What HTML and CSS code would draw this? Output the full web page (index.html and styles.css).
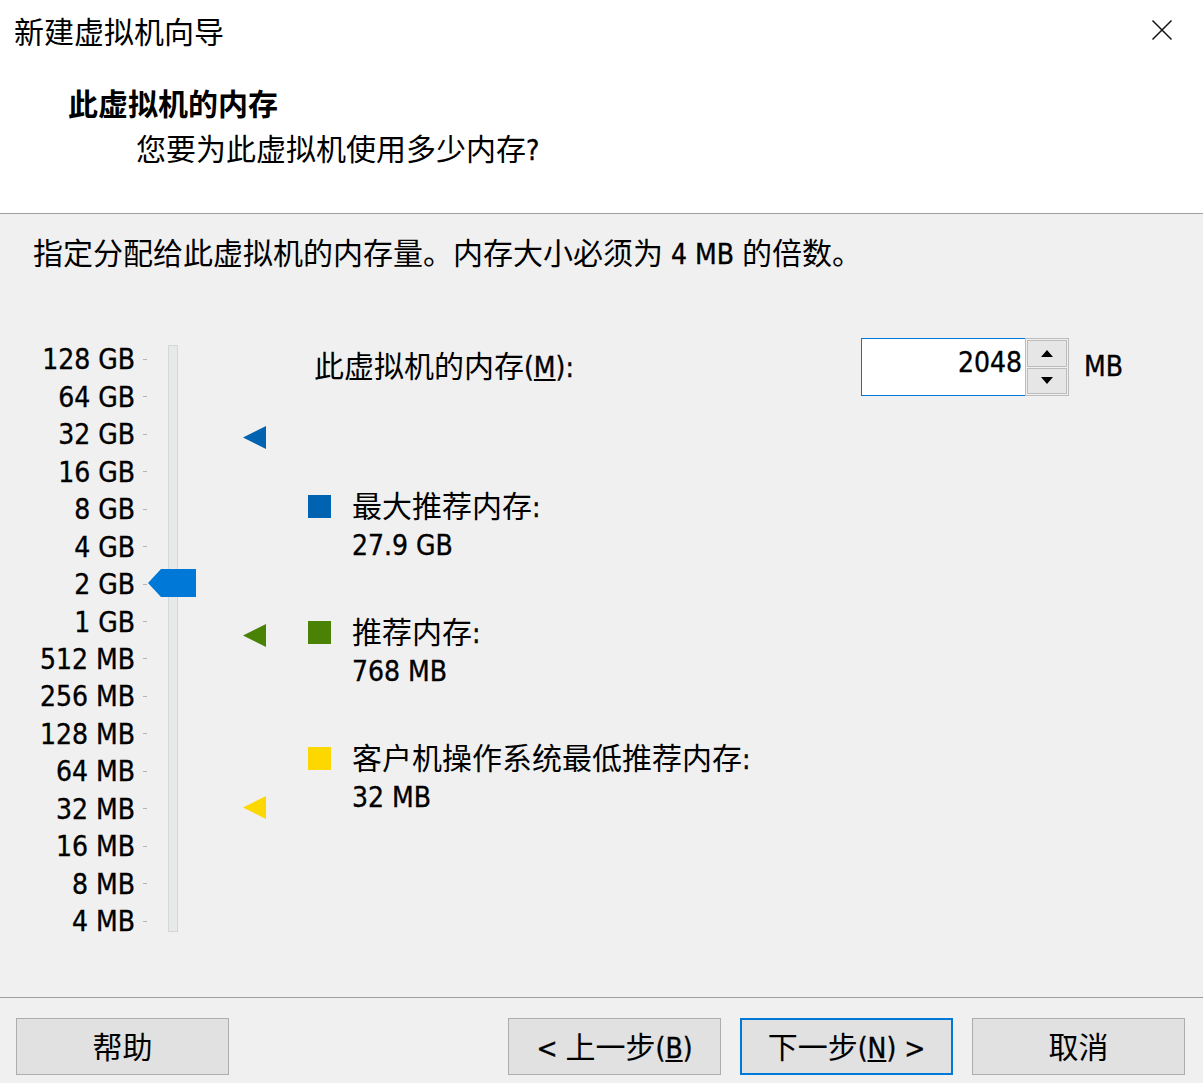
FILE: index.html
```html
<!DOCTYPE html>
<html lang="zh-CN">
<head>
<meta charset="utf-8">
<title>新建虚拟机向导</title>
<link rel="stylesheet" href="styles.css">
</head>
<body>
<div class="window">
  <header class="header">
    <div class="titlebar">
      <span class="title">新建虚拟机向导</span>
      <svg class="close" width="22" height="22" viewBox="0 0 22 22"><path d="M1.5 1.5 L20.5 20.5 M20.5 1.5 L1.5 20.5" stroke="#111" stroke-width="1.5" fill="none"/></svg>
    </div>
    <div class="h1">此虚拟机的内存</div>
    <div class="sub">您要为此虚拟机使用多少内存<span class="l">?</span></div>
  </header>

  <main class="content">
    <p class="intro">指定分配给此虚拟机的内存量。内存大小必须为<span class="l"> 4 MB </span>的倍数。</p>
    <div class="main">
      <div class="scale">
        <div class="labels">
          <div class="row"><span class="l">128 GB</span><i class="tick"></i></div>
          <div class="row"><span class="l">64 GB</span><i class="tick"></i></div>
          <div class="row"><span class="l">32 GB</span><i class="tick"></i></div>
          <div class="row"><span class="l">16 GB</span><i class="tick"></i></div>
          <div class="row"><span class="l">8 GB</span><i class="tick"></i></div>
          <div class="row"><span class="l">4 GB</span><i class="tick"></i></div>
          <div class="row"><span class="l">2 GB</span><i class="tick"></i></div>
          <div class="row"><span class="l">1 GB</span><i class="tick"></i></div>
          <div class="row"><span class="l">512 MB</span><i class="tick"></i></div>
          <div class="row"><span class="l">256 MB</span><i class="tick"></i></div>
          <div class="row"><span class="l">128 MB</span><i class="tick"></i></div>
          <div class="row"><span class="l">64 MB</span><i class="tick"></i></div>
          <div class="row"><span class="l">32 MB</span><i class="tick"></i></div>
          <div class="row"><span class="l">16 MB</span><i class="tick"></i></div>
          <div class="row"><span class="l">8 MB</span><i class="tick"></i></div>
          <div class="row"><span class="l">4 MB</span><i class="tick"></i></div>
        </div>
        <div class="track"></div>
        <svg class="thumb" width="48" height="28" viewBox="0 0 48 28"><polygon points="0,14 13,0 48,0 48,28 13,28" fill="#0078d7"/></svg>
        <svg class="marker m-max" width="23" height="23" viewBox="0 0 23 23"><polygon points="0,11.5 23,0 23,23" fill="#0063b1"/></svg>
        <svg class="marker m-rec" width="23" height="23" viewBox="0 0 23 23"><polygon points="0,11.5 23,0 23,23" fill="#498205"/></svg>
        <svg class="marker m-min" width="23" height="23" viewBox="0 0 23 23"><polygon points="0,11.5 23,0 23,23" fill="#fcd800"/></svg>
      </div>

      <div class="details">
        <div class="spinrow">
          <label class="spinlabel">此虚拟机的内存<span class="l">(<u>M</u>):</span></label>
          <div class="spin">
            <div class="spinfield"><span class="l">2048</span></div>
            <div class="spinbtns">
              <div class="sbtn"><svg width="12" height="7" viewBox="0 0 12 7"><polygon points="6,0 12,7 0,7" fill="#000"/></svg></div>
              <div class="sbtn"><svg width="12" height="7" viewBox="0 0 12 7"><polygon points="0,0 12,0 6,7" fill="#000"/></svg></div>
            </div>
          </div>
          <span class="l unit">MB</span>
        </div>

        <div class="legend">
          <div class="item">
            <i class="sq sq-max"></i>
            <div class="txt">
              <div class="name">最大推荐内存<span class="l">:</span></div>
              <div class="val l">27.9 GB</div>
            </div>
          </div>
          <div class="item">
            <i class="sq sq-rec"></i>
            <div class="txt">
              <div class="name">推荐内存<span class="l">:</span></div>
              <div class="val l">768 MB</div>
            </div>
          </div>
          <div class="item">
            <i class="sq sq-min"></i>
            <div class="txt">
              <div class="name">客户机操作系统最低推荐内存<span class="l">:</span></div>
              <div class="val l">32 MB</div>
            </div>
          </div>
        </div>
      </div>
    </div>
  </main>

  <footer class="footer">
    <button class="btn">帮助</button>
    <div class="btngroup">
      <button class="btn"><span class="l">&lt; </span>上一步<span class="l">(<u>B</u>)</span></button>
      <button class="btn default">下一步<span class="l">(<u>N</u>) &gt;</span></button>
      <button class="btn">取消</button>
    </div>
  </footer>
</div>
</body>
</html>
```

FILE: styles.css
```css
* { box-sizing: border-box; }

html, body {
  margin: 0;
  padding: 0;
  background: #f0f0f0;
}

body {
  font-family: "Noto Sans CJK SC", sans-serif;
  font-size: 30px;
  line-height: 40px;
  color: #000;
}

.l {
  font-family: "DejaVu Sans Condensed", "DejaVu Sans", sans-serif;
  font-stretch: condensed;
  font-size: 28px;
  line-height: 1;
  -webkit-text-stroke: 0.35px #000;
}

.window {
  width: 1203px;
  height: 1083px;
  display: flex;
  flex-direction: column;
  overflow: hidden;
}

/* ---------- header ---------- */
.header {
  background: #fff;
  height: 214px;
  border-bottom: 1px solid #a0a0a0;
  padding-top: 10px;
  flex: none;
}

.titlebar {
  display: flex;
  align-items: center;
  justify-content: space-between;
  padding-left: 14px;
  padding-right: 30px;
  height: 40px;
}

.close { display: block; }

.h1 {
  margin-top: 32px;
  padding-left: 68px;
  font-weight: bold;
}

.sub {
  margin-top: 5px;
  padding-left: 136px;
}

/* ---------- content ---------- */
.content {
  flex: 1;
  padding-top: 17px;
}

.intro {
  margin: 0;
  padding-left: 33px;
  height: 40px;
}

.main {
  display: flex;
  align-items: flex-start;
  margin-top: 67px;
}

.scale {
  position: relative;
  flex: none;
  width: 308px;
  height: 600px;
  margin-top: 2px;
  display: flex;
  align-items: flex-start;
}

.labels {
  width: 147px;
  display: flex;
  flex-direction: column;
}

.row {
  height: 37.47px;
  padding-top: 3px;
  display: flex;
  align-items: center;
  justify-content: flex-end;
  white-space: nowrap;
}

.tick {
  display: block;
  width: 4px;
  height: 1px;
  margin-left: 8px;
  margin-top: -2px;
  background: #b4b4b4;
}

.track {
  margin-left: 21px;
  margin-top: 5px;
  width: 10px;
  height: 587px;
  background: #e7eaea;
  border: 1px solid #d6d6d6;
}

.thumb {
  position: absolute;
  left: 148px;
  top: 229px;
}

.marker {
  position: absolute;
  left: 243px;
}
.m-max { top: 86px; }
.m-rec { top: 284px; }
.m-min { top: 456px; }

/* ---------- details ---------- */
.details {
  flex: 1;
}

.spinrow {
  display: flex;
  align-items: center;
  height: 58px;
}

.spinlabel {
  width: 553px;
  padding-left: 6px;
  white-space: nowrap;
  height: 40px;
  margin-bottom: 7px;
}

.spin {
  display: flex;
  height: 58px;
}

.spinfield {
  width: 164px;
  height: 58px;
  background: #fff;
  border: 1px solid #0078d7;
  border-right: none;
  text-align: right;
  padding-right: 3px;
  padding-top: 0;
  line-height: 40px;
}

.spinbtns {
  width: 44px;
  height: 58px;
  border: 1px solid #bcbcbc;
  padding: 1px;
  display: flex;
  flex-direction: column;
  gap: 1px;
}

.sbtn {
  flex: 1;
  background: #e6e6e6;
  border: 1px solid #bcbcbc;
  display: flex;
  align-items: center;
  justify-content: center;
}
.sbtn svg { display: block; }

.unit {
  margin-left: 15px;
}

.legend {
  margin-top: 88px;
  display: flex;
  flex-direction: column;
  gap: 44px;
}

.item {
  display: flex;
  align-items: flex-start;
}

.sq {
  display: block;
  width: 23px;
  height: 23px;
  margin-top: 11px;
  margin-right: 21px;
  flex: none;
}
.sq-max { background: #0063b1; }
.sq-rec { background: #498205; }
.sq-min { background: #fcd800; }

.name {
  white-space: nowrap;
  height: 40px;
}

.val {
  display: block;
  margin-top: 2px;
  line-height: 40px;
}

/* ---------- footer ---------- */
.footer {
  flex: none;
  height: 86px;
  border-top: 1px solid #a0a0a0;
  padding: 20px 18px 0 16px;
  display: flex;
  justify-content: space-between;
  align-items: flex-start;
}

.btngroup {
  display: flex;
  gap: 19px;
}

.btn {
  width: 213px;
  height: 57px;
  background: #e1e1e1;
  border: 1px solid #adadad;
  border-radius: 0;
  padding: 0 0 3px 0;
  margin: 0;
  font-family: "Noto Sans CJK SC", sans-serif;
  font-size: 30px;
  line-height: 40px;
  color: #000;
  white-space: nowrap;
}

.btn.default {
  border: 2px solid #0078d7;
}
```
